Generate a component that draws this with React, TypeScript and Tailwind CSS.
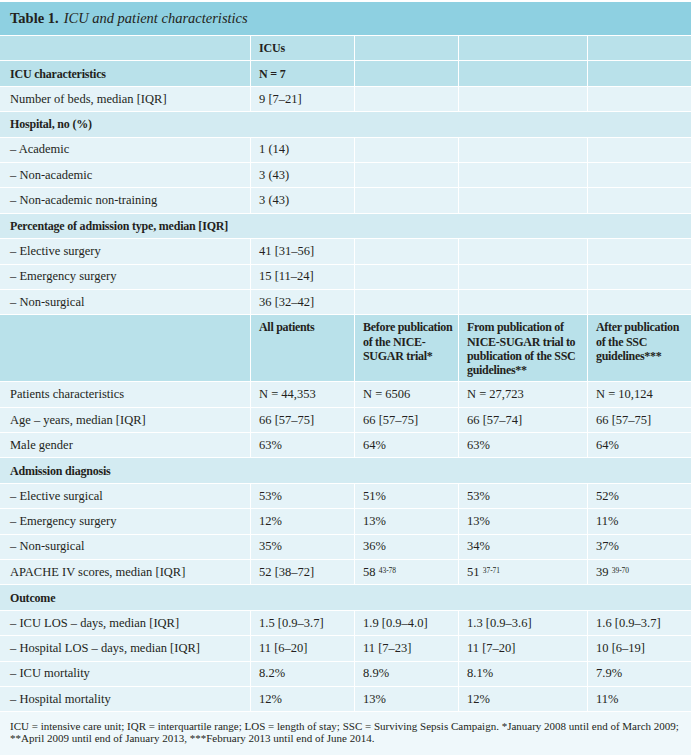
import React from "react";

type Row =
  | { kind: "head"; cells: string[] }
  | { kind: "data"; cells: React.ReactNode[] }
  | { kind: "section"; label: string }
  | { kind: "bighead"; cells: string[][] };

const sup = (main: string, s: string) => (
  <span>
    {main} <span className="relative -top-[3px] text-[7.5px]">{s}</span>
  </span>
);

const rows: Row[] = [
  { kind: "head", cells: ["", "ICUs", "", "", ""] },
  { kind: "head", cells: ["ICU characteristics", "N = 7", "", "", ""] },
  { kind: "data", cells: ["Number of beds, median [IQR]", "9 [7–21]", "", "", ""] },
  { kind: "section", label: "Hospital, no (%)" },
  { kind: "data", cells: ["– Academic", "1 (14)", "", "", ""] },
  { kind: "data", cells: ["– Non-academic", "3 (43)", "", "", ""] },
  { kind: "data", cells: ["– Non-academic non-training", "3 (43)", "", "", ""] },
  { kind: "section", label: "Percentage of admission type, median [IQR]" },
  { kind: "data", cells: ["– Elective surgery", "41 [31–56]", "", "", ""] },
  { kind: "data", cells: ["– Emergency surgery", "15 [11–24]", "", "", ""] },
  { kind: "data", cells: ["– Non-surgical", "36 [32–42]", "", "", ""] },
  {
    kind: "bighead",
    cells: [
      [],
      ["All patients"],
      ["Before publication", "of the NICE-", "SUGAR trial*"],
      ["From publication of", "NICE-SUGAR trial to", "publication of the SSC", "guidelines**"],
      ["After publication", "of the SSC", "guidelines***"],
    ],
  },
  { kind: "data", cells: ["Patients characteristics", "N = 44,353", "N = 6506", "N = 27,723", "N = 10,124"] },
  { kind: "data", cells: ["Age – years, median [IQR]", "66 [57–75]", "66 [57–75]", "66 [57–74]", "66 [57–75]"] },
  { kind: "data", cells: ["Male gender", "63%", "64%", "63%", "64%"] },
  { kind: "section", label: "Admission diagnosis" },
  { kind: "data", cells: ["– Elective surgical", "53%", "51%", "53%", "52%"] },
  { kind: "data", cells: ["– Emergency surgery", "12%", "13%", "13%", "11%"] },
  { kind: "data", cells: ["– Non-surgical", "35%", "36%", "34%", "37%"] },
  {
    kind: "data",
    cells: ["APACHE IV scores, median [IQR]", "52 [38–72]", sup("58", "43-78"), sup("51", "37-71"), sup("39", "39-70")],
  },
  { kind: "section", label: "Outcome" },
  { kind: "data", cells: ["– ICU LOS – days, median [IQR]", "1.5 [0.9–3.7]", "1.9 [0.9–4.0]", "1.3 [0.9–3.6]", "1.6 [0.9–3.7]"] },
  { kind: "data", cells: ["– Hospital LOS – days, median [IQR]", "11 [6–20]", "11 [7–23]", "11 [7–20]", "10 [6–19]"] },
  { kind: "data", cells: ["– ICU mortality", "8.2%", "8.9%", "8.1%", "7.9%"] },
  { kind: "data", cells: ["– Hospital mortality", "12%", "13%", "12%", "11%"] },
];

const grid = "grid grid-cols-[250px_103px_103px_128px_103px] gap-x-px mb-px";

export default function App() {
  return (
    <div
      className="min-h-[756px] bg-white pt-[2px] text-[#231f20]"
      style={{ fontFamily: '"Liberation Serif", "Times New Roman", serif' }}
    >
      <div className="w-[691px]">
        {/* Title */}
        <div className="h-[33px] bg-[#8ed0e1] mb-px flex items-center pl-[10px] text-[14.5px]">
          <span className="font-bold">Table 1.</span>
          <span className="italic ml-[5px]">ICU and patient characteristics</span>
        </div>

        {rows.map((r, i) => {
          if (r.kind === "section") {
            return (
              <div key={i} className="h-[24.4px] mb-px bg-[#d3ebf2] flex items-center pl-[10px] text-[12px] font-bold tracking-[-0.2px]">
                {r.label}
              </div>
            );
          }
          if (r.kind === "bighead") {
            return (
              <div key={i} className={grid}>
                {r.cells.map((lines, j) => (
                  <div
                    key={j}
                    className={`h-[66px] bg-[#b9e1ea] pt-[5px] text-[12px] font-bold leading-[14.3px] tracking-[-0.3px] whitespace-nowrap ${j === 0 ? "pl-[10px]" : "pl-2"}`}
                  >
                    {lines.map((l, k) => (
                      <div key={k}>{l}</div>
                    ))}
                  </div>
                ))}
              </div>
            );
          }
          const head = r.kind === "head";
          return (
            <div key={i} className={grid}>
              {r.cells.map((c, j) => (
                <div
                  key={j}
                  className={`h-[24.4px] flex items-center whitespace-nowrap ${
                    head ? "bg-[#b9e1ea] font-bold text-[12px] tracking-[-0.2px]" : "bg-[#e5f3f8] text-[12.5px]"
                  } ${j === 0 ? "pl-[10px]" : "pl-2"}`}
                >
                  {c}
                </div>
              ))}
            </div>
          );
        })}

        {/* Footnote */}
        <div className="h-[43px] bg-[#eff8fb] pl-[10px] pt-[8px] text-[11px] leading-[12px]">
          <p>
            ICU = intensive care unit; IQR = interquartile range; LOS = length of stay; SSC = Surviving Sepsis Campaign.
            *January 2008 until end of March 2009;
          </p>
          <p>**April 2009 until end of January 2013, ***February 2013 until end of June 2014.</p>
        </div>
      </div>
    </div>
  );
}
